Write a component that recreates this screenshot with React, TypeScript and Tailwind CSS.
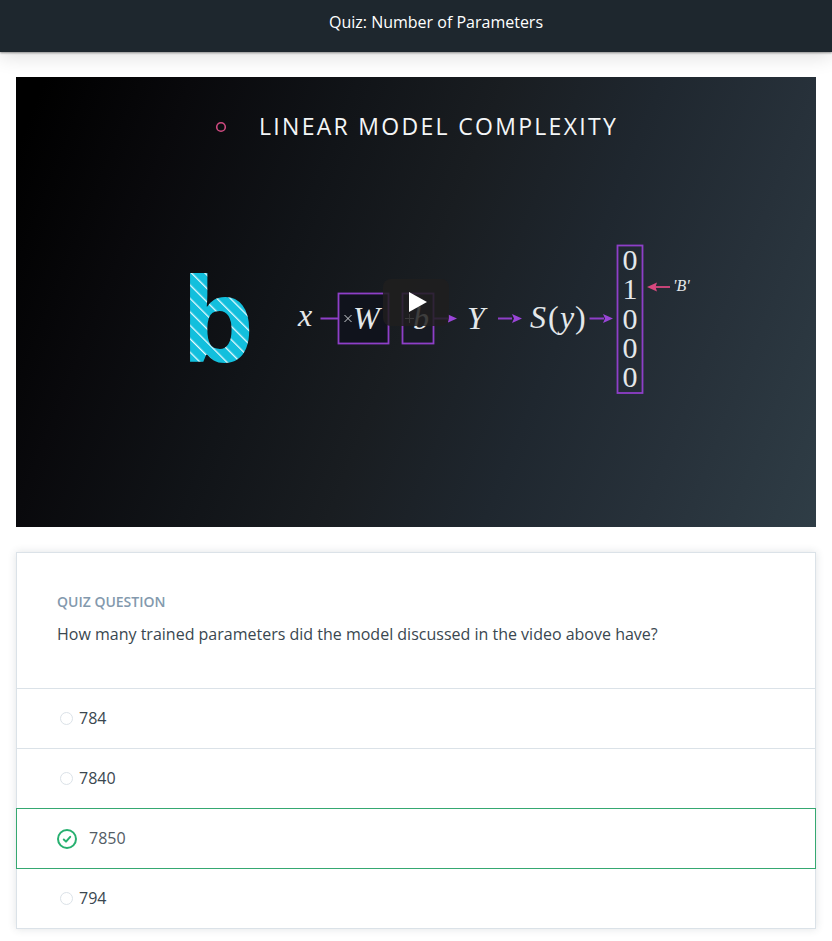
import { useState } from "react";

const OPTIONS = ["784", "7840", "7850", "794"];
const CORRECT = "7850";

function Slide() {
  return (
    <svg viewBox="0 0 800 450" className="block h-full w-full" role="img" aria-label="Linear model complexity">
      <defs>
        <pattern id="stripes" width="9.5" height="9.5" patternUnits="userSpaceOnUse" patternTransform="rotate(45)">
          <rect width="9.5" height="9.5" fill="#12bfdd" />
          <rect width="9.5" height="1.3" y="4.4" fill="#e6fbff" />
        </pattern>
      </defs>

      <circle cx="205" cy="50" r="4.3" fill="none" stroke="#cf4a80" strokeWidth="1.6" />
      <text x="243" y="58" fontSize="23" fill="#f4f6f7" className="font-['Open_Sans',sans-serif] tracking-widest">
        LINEAR MODEL COMPLEXITY
      </text>

      <text x="165" y="285" fontSize="116" fontWeight="700" fill="url(#stripes)" className="font-['Open_Sans',sans-serif]">
        b
      </text>

      <g fill="none" stroke="#8e3fc8" strokeWidth="1.8">
        <rect x="322.5" y="216.5" width="50" height="50" fill="#10131c" />
        <rect x="386.5" y="216.5" width="31" height="50" fill="#161a22" />
        <rect x="601.5" y="168.5" width="25" height="147.5" />
        <path d="M304.5 241.5H322M418 241.5H434M482 241.5H496M573.5 241.5H588" />
      </g>
      <g fill="#9a45d8">
        <path d="M432 237.5L441 241.5L432 245.5Z" />
        <path d="M496 237L506 241.5L496 246L498 241.5Z" />
        <path d="M587 237L597 241.5L587 246L589 241.5Z" />
      </g>
      <path d="M639 210H654" stroke="#d8487f" strokeWidth="1.8" />
      <path d="M641 205.5L631 210L641 214.5L639.5 210Z" fill="#d8487f" />

      <g fill="#e4e8ea" fontSize="32" className="font-['Liberation_Serif',serif]">
        <text x="282" y="249" fontStyle="italic">x</text>
        <text x="337" y="252" fontStyle="italic">W</text>
        <text x="397" y="252" fontStyle="italic">b</text>
        <text x="451" y="252" fontStyle="italic">Y</text>
        <text x="514" y="251" fontStyle="italic">S</text>
        <text x="532" y="251">(</text>
        <text x="544" y="251" fontStyle="italic">y</text>
        <text x="559" y="251">)</text>
        <g textAnchor="middle" fontSize="30">
          <text x="614" y="193">0</text>
          <text x="614" y="222">1</text>
          <text x="614" y="252">0</text>
          <text x="614" y="281">0</text>
          <text x="614" y="310">0</text>
        </g>
        <text x="657" y="214" fontSize="16" fontStyle="italic">'B'</text>
      </g>
      <path d="M328.5 238l7 7M335.5 238l-7 7M389 241.5h9M393.5 237v9" stroke="#cdd1d4" strokeWidth="1" />
    </svg>
  );
}

function CheckIcon() {
  return (
    <svg viewBox="0 0 20 20" className="h-5 w-5 shrink-0" fill="none" stroke="#27b070" aria-hidden="true">
      <circle cx="10" cy="10" r="9" strokeWidth="2" />
      <path d="M6.8 10.5L9 12.6L13.2 7.8" strokeWidth="2" strokeLinecap="round" strokeLinejoin="round" />
    </svg>
  );
}

export default function App() {
  const [answer, setAnswer] = useState(CORRECT);

  return (
    <div className="bg-white font-['Open_Sans',sans-serif] text-base text-[#3a4750]">
      <header className="relative h-[52px] bg-[#1e272e] pt-2.5 pl-10 text-center shadow-[0_1px_2px_rgba(0,0,0,0.4),0_4px_20px_rgba(0,0,0,0.14)]">
        <h1 className="text-base leading-6 text-white">Quiz: Number of Parameters</h1>
      </header>

      <main className="flex flex-col gap-[25px] px-4 pt-[25px] pb-3">
        <section className="relative aspect-video bg-[linear-gradient(112deg,#000_3%,#09090c_18%,#111418_35%,#191d21_50%,#1f272f_66%,#27313a_82%,#2f3d46_100%)]">
          <Slide />
          <button
            type="button"
            aria-label="Play video"
            className="absolute inset-0 m-auto flex h-[47px] w-[66px] items-center justify-center rounded-lg bg-[#201f1f]/85 pl-1"
          >
            <svg viewBox="0 0 18 20" className="h-5 w-[18px]" fill="#fff" aria-hidden="true">
              <path d="M0 0L18 10L0 20Z" />
            </svg>
          </button>
        </section>

        <form className="border border-[#dbe2e8] bg-white shadow-[0_0_8px_rgba(46,61,73,0.15)]">
          <fieldset>
            <legend className="w-full px-10 pt-10 pb-[42px]">
              <span className="block text-sm leading-[18px] font-semibold text-[#8399ad]">QUIZ QUESTION</span>
              <span className="block pt-[11px] leading-6">
                How many trained parameters did the model discussed in the video above have?
              </span>
            </legend>
            {OPTIONS.map((value) => {
              const correct = value === CORRECT && answer === value;
              return (
                <label
                  key={value}
                  className={
                    correct
                      ? "relative -mx-px -mb-px flex h-[61px] items-center gap-3 border border-[#35a871] px-10 text-[#525c65]"
                      : "flex h-[60px] items-center gap-1.5 border-t border-[#dbe2e8] px-[43px]"
                  }
                >
                  <input
                    type="radio"
                    name="answer"
                    value={value}
                    checked={answer === value}
                    onChange={() => setAnswer(value)}
                    className={
                      correct
                        ? "sr-only"
                        : "h-[13px] w-[13px] shrink-0 appearance-none rounded-full border border-[#dbe2e8] checked:border-4"
                    }
                  />
                  {correct && <CheckIcon />}
                  <span className="pb-0.5">{value}</span>
                </label>
              );
            })}
          </fieldset>
        </form>
      </main>
    </div>
  );
}
